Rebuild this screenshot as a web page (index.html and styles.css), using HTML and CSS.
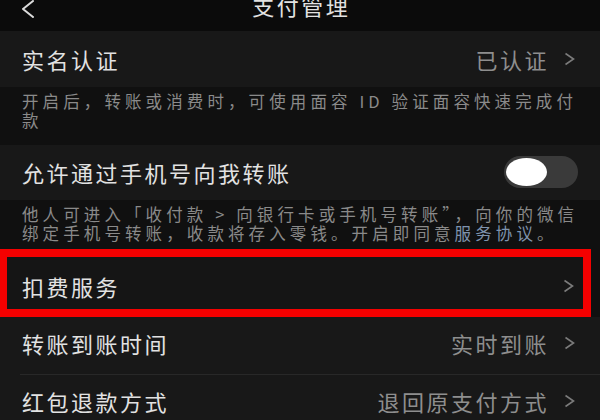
FILE: index.html
```html
<!DOCTYPE html>
<html lang="zh-CN">
<head>
    <meta charset="UTF-8">
    <meta name="viewport" content="width=device-width, initial-scale=1.0">
    <title>支付管理</title>
    <link rel="stylesheet" href="styles.css">
</head>
<body>
    <div class="header">
        <a href="#" class="back">
            <svg width="14" height="18" viewBox="0 0 14 18"><path d="M12 1 L2 9 L12 17" fill="none" stroke="#dcdcdc" stroke-width="2" stroke-linecap="round" stroke-linejoin="round"/></svg>
        </a>
        <h1>支付管理</h1>
    </div>

    <div class="row row-first">
        <span class="label">实名认证</span>
        <span class="right">
            <span class="value">已认证</span>
            <svg class="chevron" width="11" height="14" viewBox="0 0 11 14"><path d="M1.5 1.5 L9.5 7 L1.5 12.5" fill="none" stroke="#7b7b7b" stroke-width="1.6"/></svg>
        </span>
    </div>
    <div class="desc desc-first">开启后，转账或消费时，可使用面容 ID 验证面容快速完成付款</div>

    <div class="row row-second">
        <span class="label">允许通过手机号向我转账</span>
        <div class="toggle"><div class="knob"></div></div>
    </div>
    <div class="desc desc-second">他人可进入「收付款 &gt; 向银行卡或手机号转账”，向你的微信绑定手机号转账，收款将存入零钱。开启即同意<a href="#">服务协议</a>。</div>

    <div class="row marked">
        <span class="label">扣费服务</span>
        <svg class="chevron" width="11" height="14" viewBox="0 0 11 14"><path d="M1.5 1.5 L9.5 7 L1.5 12.5" fill="none" stroke="#7b7b7b" stroke-width="1.6"/></svg>
    </div>

    <div class="group">
        <div class="row">
            <span class="label">转账到账时间</span>
            <span class="right">
                <span class="value">实时到账</span>
                <svg class="chevron" width="11" height="14" viewBox="0 0 11 14"><path d="M1.5 1.5 L9.5 7 L1.5 12.5" fill="none" stroke="#7b7b7b" stroke-width="1.6"/></svg>
            </span>
        </div>
        <div class="row">
            <span class="label">红包退款方式</span>
            <span class="right">
                <span class="value">退回原支付方式</span>
                <svg class="chevron" width="11" height="14" viewBox="0 0 11 14"><path d="M1.5 1.5 L9.5 7 L1.5 12.5" fill="none" stroke="#7b7b7b" stroke-width="1.6"/></svg>
            </span>
        </div>
    </div>
</body>
</html>
```

FILE: styles.css
```css
body {
    margin: 0;
    background-color: #101010;
    font-family: "Noto Sans CJK SC", "Noto Sans", sans-serif;
    color: #e2e2e2;
    overflow: hidden;
}

.header {
    height: 31px;
    background-color: #0b0b0b;
    display: flex;
    align-items: flex-end;
    justify-content: center;
    position: relative;
}

.header h1 {
    margin: 0 0 13px 0;
    font-size: 22px;
    font-weight: normal;
    letter-spacing: 2.5px;
    line-height: 26px;
    padding-left: 2.5px;
}

.back {
    position: absolute;
    left: 21px;
    top: -1px;
}

.row {
    display: flex;
    align-items: center;
    justify-content: space-between;
    background-color: #181818;
    padding: 0 25px 0 22px;
    height: 57px;
    box-sizing: border-box;
}

.label {
    font-size: 22px;
    letter-spacing: 2.5px;
    line-height: 26px;
}

.right {
    display: flex;
    align-items: center;
}

.value {
    font-size: 22px;
    letter-spacing: 2.5px;
    line-height: 26px;
    color: #8e8e8e;
    margin-right: 15px;
}

.chevron {
    display: block;
}

.row-first {
    height: 56px;
}

.row-second {
    height: 55px;
    padding-right: 22px;
    padding-bottom: 2px;
}

.desc {
    font-size: 16.5px;
    letter-spacing: 4.1px;
    line-height: 19px;
    color: #8a8a8a;
    padding: 5px 18px 0 22px;
    box-sizing: border-box;
}

.desc a {
    color: #7f93ad;
    text-decoration: none;
}

.desc-first {
    height: 58px;
}

.desc-second {
    height: 49px;
}

.toggle {
    width: 74px;
    height: 32px;
    border-radius: 16px;
    background-color: #3a3a3a;
    display: flex;
    align-items: center;
    padding: 0 2px;
    box-sizing: border-box;
}

.knob {
    width: 41px;
    height: 28px;
    border-radius: 50%;
    background-color: #fff;
}

.marked {
    height: 68px;
    border: 8px solid #f40000;
    border-left-width: 7px;
    margin-right: 9px;
    padding: 5px 9px 0 15px;
    background-color: #151515;
}

.group {
    background-color: #181818;
    padding-left: 20px;
}

.group .row {
    padding-left: 2px;
    padding-bottom: 5px;
    height: 57px;
}

.group .row + .row {
    border-top: 1px solid #282828;
    height: 58px;
}
```
